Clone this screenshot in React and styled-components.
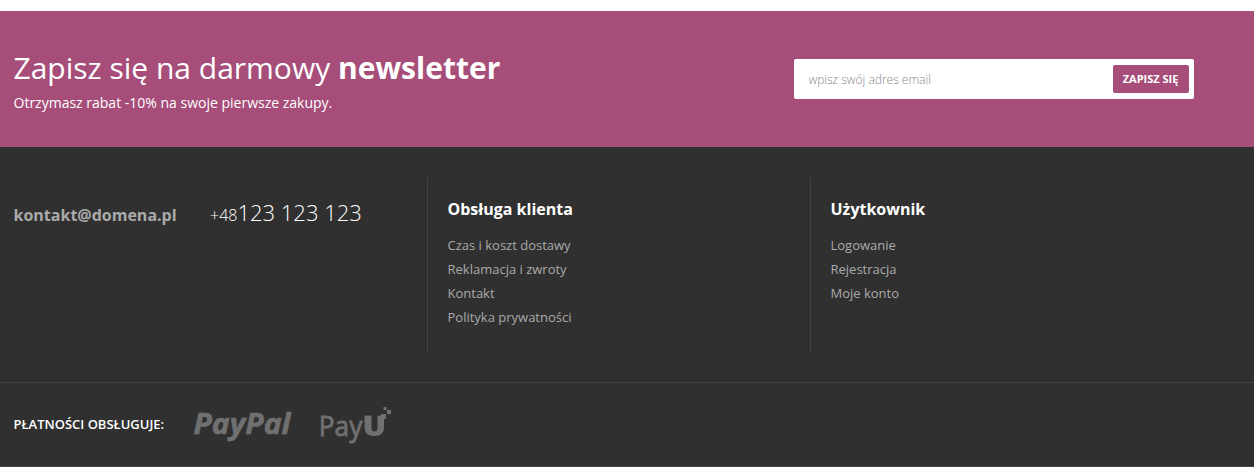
import React from "react";
import styled, { createGlobalStyle } from "styled-components";

const GlobalStyle = createGlobalStyle`
  * { box-sizing: border-box; }
  body {
    margin: 0;
    background: #fff;
    font-family: "Open Sans", "Noto Sans", sans-serif;
    font-size: 13px;
    overflow: hidden;
  }
`;

const Page = styled.div`
  padding-top: 11px;
`;

const Newsletter = styled.section`
  display: flex;
  justify-content: space-between;
  height: 136px;
  padding: 36px 60px 0 13.5px;
  background: #a64e79;
  color: #fff;
`;

const Title = styled.h2`
  margin: 0;
  font-size: 30px;
  line-height: 42px;
  font-weight: 400;
  white-space: nowrap;
  strong { font-weight: 700; }
`;

const Subtitle = styled.p`
  margin: 4px 0 0;
  font-size: 14px;
  line-height: 20px;
`;

const Form = styled.form`
  display: flex;
  align-items: center;
  width: 400px;
  height: 40px;
  margin-top: 12px;
  padding: 0 5px 0 14.5px;
  background: #fff;
  border-radius: 2px;
`;

const EmailInput = styled.input`
  flex: 1;
  min-width: 0;
  padding: 1px 0 0;
  border: 0;
  outline: 0;
  background: transparent;
  font: 300 12px/20px "Open Sans", sans-serif;
  &::placeholder { color: #888; opacity: 1; }
`;

const SubmitButton = styled.button`
  width: 76px;
  height: 28px;
  padding: 0 1px 0 0;
  border: 0;
  border-radius: 2px;
  background: #a64e79;
  color: #fff;
  font: 700 11px/28px "Open Sans", sans-serif;
`;

const Footer = styled.footer`
  background: #303030;
  color: #fff;
`;

const Columns = styled.div`
  display: grid;
  grid-template-columns: 427px 383px 1fr;
  height: 236px;
  padding: 30px 0;
  border-bottom: 1px solid #444;
`;

const Contact = styled.div`
  display: flex;
  align-items: baseline;
  height: 70px;
  padding: 19px 0 0 13.5px;
`;

const Email = styled.a`
  width: 196.5px;
  color: #aaa;
  font-size: 16px;
  font-weight: 700;
`;

const Phone = styled.span`
  font-size: 22px;
  line-height: 32px;
  font-weight: 300;
  white-space: nowrap;
  small { font-size: 16px; }
`;

const LinkColumn = styled.nav`
  padding: 20px 0 0 19.5px;
  border-left: 1px solid #444;
`;

const ColumnTitle = styled.h3`
  margin: 0 0 12px;
  font-size: 16px;
  line-height: 24px;
  font-weight: 700;
`;

const LinkList = styled.ul`
  margin: 0;
  padding: 0;
  list-style: none;
`;

const LinkItem = styled.li`
  color: #aaa;
  font-size: 13px;
  line-height: 24px;
`;

const Payments = styled.div`
  display: flex;
  align-items: center;
  height: 84px;
  padding-left: 13.5px;
  border-bottom: 1px solid #444;
`;

const PaymentsLabel = styled.span`
  width: 176.5px;
  padding-bottom: 2px;
  font-size: 13px;
  font-weight: 600;
  white-space: nowrap;
`;

const Logo = styled.svg`
  flex: none;
  fill: #707070;
`;

const columns = [
  { title: "Obsługa klienta", links: ["Czas i koszt dostawy", "Reklamacja i zwroty", "Kontakt", "Polityka prywatności"] },
  { title: "Użytkownik", links: ["Logowanie", "Rejestracja", "Moje konto"] },
];

function PayPalLogo() {
  return (
    <Logo width="110" height="43" aria-label="PayPal">
      <text x="3.5" y="31" textLength="97" lengthAdjust="spacingAndGlyphs" stroke="#707070" strokeWidth="0.6"
        fontFamily="Open Sans, sans-serif" fontSize="28.500" fontWeight="700" fontStyle="italic">PayPal</text>
    </Logo>
  );
}

function PayULogo() {
  return (
    <Logo width="94" height="43" aria-label="PayU">
      <text x="18.8" y="32.500" textLength="43.500" lengthAdjust="spacingAndGlyphs" stroke="#707070" strokeWidth="0.8"
        fontFamily="Open Sans, sans-serif" fontSize="27" fontWeight="400">Pay</text>
      <path d="M64.500 12.500h7v12.500q0 3.500 3 3.500t3-3.500V12.500h3.500V11h5v5h-2v8.500q0 8.500-9.700 8.500t-9.800-8.500z" />
      <path d="M83.500 4h3v3h-3zM87 7h4v4h-4z" />
    </Logo>
  );
}

export default function App() {
  return (
    <Page>
      <GlobalStyle />
      <Newsletter>
        <div>
          <Title>Zapisz się na darmowy <strong>newsletter</strong></Title>
          <Subtitle>Otrzymasz rabat -10% na swoje pierwsze zakupy.</Subtitle>
        </div>
        <Form>
          <EmailInput type="email" placeholder="wpisz swój adres email" />
          <SubmitButton type="button">ZAPISZ SIĘ</SubmitButton>
        </Form>
      </Newsletter>
      <Footer>
        <Columns>
          <Contact>
            <Email>kontakt@domena.pl</Email>
            <Phone><small>+48</small>123 123 123</Phone>
          </Contact>
          {columns.map((column) => (
            <LinkColumn key={column.title}>
              <ColumnTitle>{column.title}</ColumnTitle>
              <LinkList>
                {column.links.map((link) => <LinkItem key={link}>{link}</LinkItem>)}
              </LinkList>
            </LinkColumn>
          ))}
        </Columns>
        <Payments>
          <PaymentsLabel>PŁATNOŚCI OBSŁUGUJE:</PaymentsLabel>
          <PayPalLogo />
          <PayULogo />
        </Payments>
      </Footer>
    </Page>
  );
}
